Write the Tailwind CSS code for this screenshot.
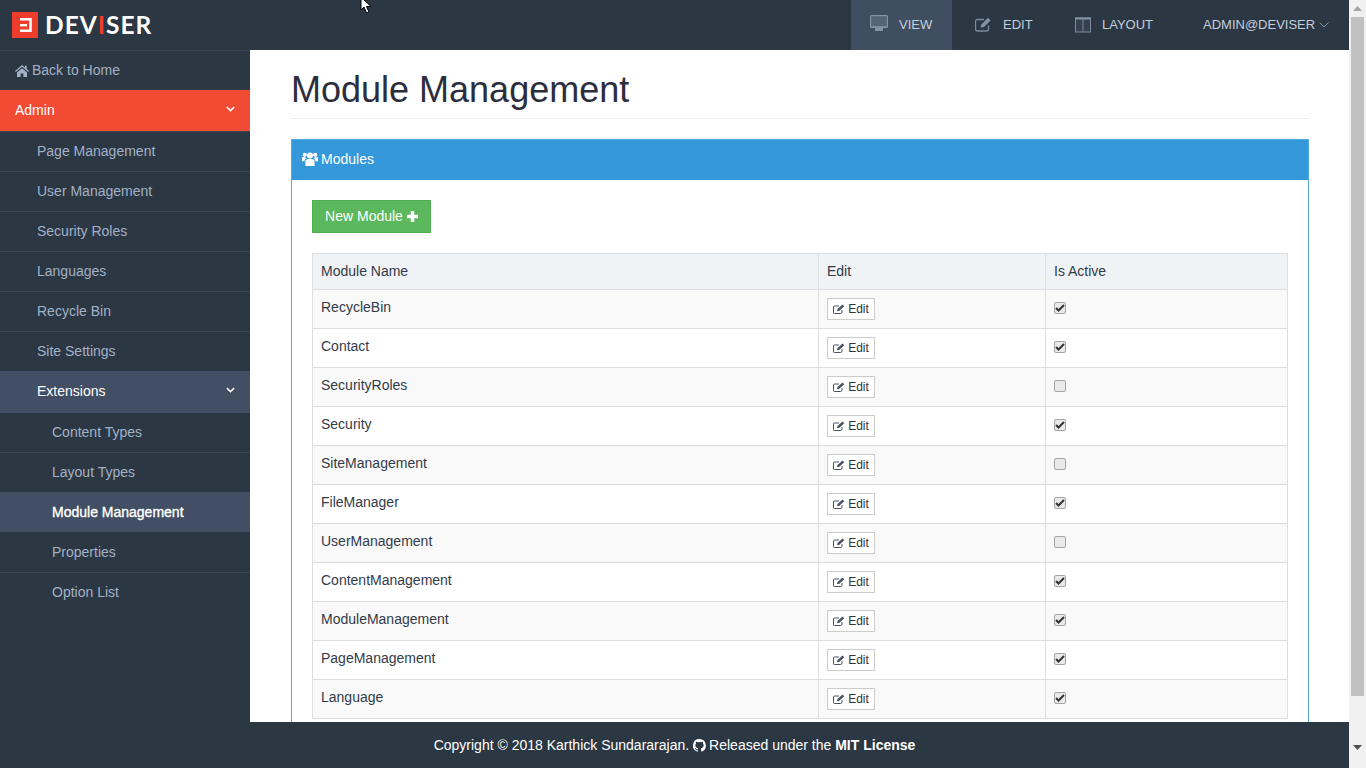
<!DOCTYPE html>
<html lang="en">
<head>
<meta charset="utf-8">
<title>Module Management</title>
<script src="https://cdn.jsdelivr.net/npm/@tailwindcss/browser@4"></script>
</head>
<body class="overflow-hidden font-['Liberation_Sans',Arial,sans-serif]">
<div class="relative flex h-[768px] w-[1366px] overflow-hidden bg-white">
  <div class="flex h-full w-[1349px] flex-col">
    <!-- Top bar -->
    <header class="flex h-[50px] shrink-0 items-center bg-[#2c3744]">
      <div class="ml-[12px] flex items-center">
        <svg width="26" height="26" viewBox="0 0 26 26"><rect width="26" height="26" fill="#ee3e2b"/><path d="M8 7.300h10.500v11.500H8" fill="none" stroke="#fff" stroke-width="2.500"/><path d="M8 13.200h7" stroke="#fff" stroke-width="2.300"/></svg>
        <span class="ml-[7px] text-[24.500px] font-bold leading-none tracking-[1px] text-white font-['Lato',sans-serif]">DEV<span class="text-[#ee3e2b]">I</span>SER</span>
      </div>
      <nav class="ml-auto flex h-full items-center text-[13px] text-[#c3cedb]">
        <a class="flex h-full w-[101px] items-center bg-[#3f4e60] pb-[1px] pl-[19px]">
          <svg class="mb-[3px]" width="18" height="16" viewBox="0 0 18 16" fill="none"><rect x="0" y="0" width="18" height="13" rx="1.500" fill="#8392a5"/><rect x="1.200" y="1.200" width="15.600" height="10" fill="#566577"/><rect x="5" y="13" width="8" height="3" fill="#8392a5"/></svg>
          <span class="ml-[11px]">VIEW</span>
        </a>
        <a class="flex h-full w-[103px] items-center pb-[1px] pl-[23px]">
          <svg class="mb-[1px]" width="17" height="15" viewBox="0 0 17 15" fill="none"><path d="M13.500 8.500V12a2 2 0 0 1-2 2h-9a2 2 0 0 1-2-2V4.500a2 2 0 0 1 2-2H9" stroke="#7c8a9b" stroke-width="1.300"/><path d="M5.500 10.500l.8-3L13 .8l2.600 2.600L9 10z" fill="#8392a5"/></svg>
          <span class="ml-[11px]">EDIT</span>
        </a>
        <a class="flex h-full w-[148px] items-center pb-[1px] pl-[20px]">
          <svg width="16" height="16" viewBox="0 0 16 16" fill="none"><rect x="0.500" y="1" width="15" height="14" fill="#35414f" stroke="#7c8a9b"/><path d="M0 1.500h16" stroke="#8392a5" stroke-width="2"/><path d="M8 1.500v13.500" stroke="#7c8a9b"/></svg>
          <span class="ml-[11px]">LAYOUT</span>
        </a>
        <a class="flex h-full w-[146px] items-center pb-[1px]">
          <span>ADMIN@DEVISER</span>
          <svg class="ml-[4px]" width="10" height="6" viewBox="0 0 10 6" fill="none"><path d="M.5.5 5 5 9.500.5" stroke="#8695a6"/></svg>
        </a>
      </nav>
    </header>

    <div class="flex min-h-0 flex-1">
      <!-- Sidebar -->
      <aside class="flex w-[250px] shrink-0 flex-col bg-[#2c3744] text-[14px] text-[#a3b1c4]">
        <a class="flex h-[40px] items-center border-t border-[#3a4655] pl-[15px]">
          <svg width="14" height="12" viewBox="0 0 14 12" fill="#a3b1c4"><path d="M7 0 0 6l.8.900L7 1.700l6.200 5.200L14 6l-2.300-2V.8H9.900v1.600zM2 7.400V12h3.600V8.400h2.800V12H12V7.400L7 3.200z"/></svg>
          <span class="ml-[3px]">Back to Home</span>
        </a>
        <a class="flex h-[41px] items-center justify-between bg-[#f24b34] pb-[1px] pl-[15px] pr-[15px] text-white">
          <span>Admin</span>
          <svg class="mb-[3px]" width="9" height="6" viewBox="0 0 9 6" fill="none"><path d="M.8 1 4.500 4.600 8.200 1" stroke="#fff" stroke-width="1.600"/></svg>
        </a>
        <a class="flex h-[40px] items-center border-t border-[#3a4655] pl-[37px]">Page Management</a>
        <a class="flex h-[40px] items-center border-t border-[#3a4655] pl-[37px]">User Management</a>
        <a class="flex h-[40px] items-center border-t border-[#3a4655] pl-[37px]">Security Roles</a>
        <a class="flex h-[40px] items-center border-t border-[#3a4655] pl-[37px]">Languages</a>
        <a class="flex h-[40px] items-center border-t border-[#3a4655] pl-[37px]">Recycle Bin</a>
        <a class="flex h-[40px] items-center border-t border-[#3a4655] pl-[37px]">Site Settings</a>
        <a class="flex h-[42px] items-center justify-between bg-[#414e63] pb-[2px] pl-[37px] pr-[15px] text-white">
          <span>Extensions</span>
          <svg class="mb-[3px]" width="9" height="6" viewBox="0 0 9 6" fill="none"><path d="M.8 1 4.500 4.600 8.200 1" stroke="#fff" stroke-width="1.600"/></svg>
        </a>
        <a class="flex h-[40px] items-center border-b border-[#3a4655] pl-[52px]">Content Types</a>
        <a class="flex h-[39px] items-center pl-[52px]">Layout Types</a>
        <a class="flex h-[40px] items-center bg-[#414e63] pl-[52px] text-white [-webkit-text-stroke:0.35px_#fff]">Module Management</a>
        <a class="flex h-[40px] items-center pl-[52px]">Properties</a>
        <a class="flex h-[40px] items-center border-t border-[#3a4655] pl-[52px]">Option List</a>
      </aside>

      <!-- Content -->
      <main class="min-w-0 flex-1 overflow-hidden pl-[41px] pr-[40px] pt-[20px] text-[14px] text-[#333b4a]">
        <h1 class="border-b border-[#eeeeee] pb-[9px] text-[36px] leading-[39px] font-normal text-[#2c2e3e]">Module Management</h1>
        <section class="mt-[20px] border border-[#52a8e0]">
          <div class="flex h-[40px] items-center bg-[#3498db] pb-[2px] pl-[10px] text-white">
            <svg width="16" height="14" viewBox="0 0 16 14" fill="#fff"><circle cx="8" cy="3.600" r="3"/><circle cx="2.800" cy="2.800" r="2.100"/><circle cx="13.200" cy="2.800" r="2.100"/><path d="M3.400 9.500C3.400 7.600 5 7 8 7s4.600.6 4.600 2.500V14H3.400z"/><path d="M0 5.800C0 5.200 1 5.100 2.800 5.100c.4.600.9 1 1.400 1.300-1 .5-1.600 1.300-1.700 2.800H0zM16 5.800c0-.6-1-.7-2.800-.7-.4.600-.9 1-1.400 1.300 1 .5 1.600 1.300 1.700 2.800H16z"/></svg>
            <span class="ml-[3px]">Modules</span>
          </div>
          <div class="px-[20px] pt-[20px] pb-[20px]">
            <a class="flex h-[33px] w-[119px] items-center justify-center border border-[#4cae4c] bg-[#5cb85c] text-white">
              New Module
              <svg class="ml-[4px]" width="11" height="11" viewBox="0 0 11 11" fill="#fff"><path d="M3.800 0h3.400v3.800H11v3.400H7.200V11H3.800V7.200H0V3.800h3.800z"/></svg>
            </a>
            <table class="mt-[20px] w-[975px] table-fixed border-collapse border border-[#e7eaee] text-left">
              <colgroup><col class="w-[506px]"><col class="w-[227px]"><col class="w-[242px]"></colgroup>
              <thead>
                <tr class="h-[36px] bg-[#f0f3f6]">
                  <th class="border border-[#dddfe3] px-[8px] font-normal">Module Name</th>
                  <th class="border border-[#dddfe3] px-[8px] font-normal">Edit</th>
                  <th class="border border-[#dddfe3] px-[8px] font-normal">Is Active</th>
                </tr>
              </thead>
              <tbody>
                <tr class="h-[39px] bg-[#f9f9f9]"><td class="border border-[#dddddd] px-[8px] pb-[4px]">RecycleBin</td><td class="border border-[#dddddd] px-[8px]"><a class="flex h-[22px] w-[48px] items-center justify-center border border-[#cccccc] bg-white text-[12px] text-[#333333]"><svg class="mr-[3px]" width="12" height="10" viewBox="0 0 12 10" fill="none"><path d="M9 6v2a1.500 1.500 0 0 1-1.500 1.500h-6A1 1 0 0 1 .5 8.200V3a1 1 0 0 1 1-1H6" stroke="#4a5160"/><path d="M4 7l.5-2L9.500.5l1.800 1.800L6 7z" fill="#4a5160"/></svg>Edit</a></td><td class="border border-[#dddddd] px-[8px]"><span class="mb-[2px] flex h-[12px] w-[12px] items-center justify-center rounded-[2px] border border-[#a5a5a5] bg-[#e9e9e9]"><svg width="10" height="8" viewBox="0 0 10 8" fill="none"><path d="M1 4l2.500 2.500L9 1" stroke="#333333" stroke-width="2"/></svg></span></td></tr>
                <tr class="h-[39px] bg-white"><td class="border border-[#dddddd] px-[8px] pb-[4px]">Contact</td><td class="border border-[#dddddd] px-[8px]"><a class="flex h-[22px] w-[48px] items-center justify-center border border-[#cccccc] bg-white text-[12px] text-[#333333]"><svg class="mr-[3px]" width="12" height="10" viewBox="0 0 12 10" fill="none"><path d="M9 6v2a1.500 1.500 0 0 1-1.500 1.500h-6A1 1 0 0 1 .5 8.200V3a1 1 0 0 1 1-1H6" stroke="#4a5160"/><path d="M4 7l.5-2L9.500.5l1.800 1.800L6 7z" fill="#4a5160"/></svg>Edit</a></td><td class="border border-[#dddddd] px-[8px]"><span class="mb-[2px] flex h-[12px] w-[12px] items-center justify-center rounded-[2px] border border-[#a5a5a5] bg-[#e9e9e9]"><svg width="10" height="8" viewBox="0 0 10 8" fill="none"><path d="M1 4l2.500 2.500L9 1" stroke="#333333" stroke-width="2"/></svg></span></td></tr>
                <tr class="h-[39px] bg-[#f9f9f9]"><td class="border border-[#dddddd] px-[8px] pb-[4px]">SecurityRoles</td><td class="border border-[#dddddd] px-[8px]"><a class="flex h-[22px] w-[48px] items-center justify-center border border-[#cccccc] bg-white text-[12px] text-[#333333]"><svg class="mr-[3px]" width="12" height="10" viewBox="0 0 12 10" fill="none"><path d="M9 6v2a1.500 1.500 0 0 1-1.500 1.500h-6A1 1 0 0 1 .5 8.200V3a1 1 0 0 1 1-1H6" stroke="#4a5160"/><path d="M4 7l.5-2L9.500.5l1.800 1.800L6 7z" fill="#4a5160"/></svg>Edit</a></td><td class="border border-[#dddddd] px-[8px]"><span class="mb-[2px] block h-[12px] w-[12px] rounded-[2px] border border-[#a5a5a5] bg-[#e9e9e9]"></span></td></tr>
                <tr class="h-[39px] bg-white"><td class="border border-[#dddddd] px-[8px] pb-[4px]">Security</td><td class="border border-[#dddddd] px-[8px]"><a class="flex h-[22px] w-[48px] items-center justify-center border border-[#cccccc] bg-white text-[12px] text-[#333333]"><svg class="mr-[3px]" width="12" height="10" viewBox="0 0 12 10" fill="none"><path d="M9 6v2a1.500 1.500 0 0 1-1.500 1.500h-6A1 1 0 0 1 .5 8.200V3a1 1 0 0 1 1-1H6" stroke="#4a5160"/><path d="M4 7l.5-2L9.500.5l1.800 1.800L6 7z" fill="#4a5160"/></svg>Edit</a></td><td class="border border-[#dddddd] px-[8px]"><span class="mb-[2px] flex h-[12px] w-[12px] items-center justify-center rounded-[2px] border border-[#a5a5a5] bg-[#e9e9e9]"><svg width="10" height="8" viewBox="0 0 10 8" fill="none"><path d="M1 4l2.500 2.500L9 1" stroke="#333333" stroke-width="2"/></svg></span></td></tr>
                <tr class="h-[39px] bg-[#f9f9f9]"><td class="border border-[#dddddd] px-[8px] pb-[4px]">SiteManagement</td><td class="border border-[#dddddd] px-[8px]"><a class="flex h-[22px] w-[48px] items-center justify-center border border-[#cccccc] bg-white text-[12px] text-[#333333]"><svg class="mr-[3px]" width="12" height="10" viewBox="0 0 12 10" fill="none"><path d="M9 6v2a1.500 1.500 0 0 1-1.500 1.500h-6A1 1 0 0 1 .5 8.200V3a1 1 0 0 1 1-1H6" stroke="#4a5160"/><path d="M4 7l.5-2L9.500.5l1.800 1.800L6 7z" fill="#4a5160"/></svg>Edit</a></td><td class="border border-[#dddddd] px-[8px]"><span class="mb-[2px] block h-[12px] w-[12px] rounded-[2px] border border-[#a5a5a5] bg-[#e9e9e9]"></span></td></tr>
                <tr class="h-[39px] bg-white"><td class="border border-[#dddddd] px-[8px] pb-[4px]">FileManager</td><td class="border border-[#dddddd] px-[8px]"><a class="flex h-[22px] w-[48px] items-center justify-center border border-[#cccccc] bg-white text-[12px] text-[#333333]"><svg class="mr-[3px]" width="12" height="10" viewBox="0 0 12 10" fill="none"><path d="M9 6v2a1.500 1.500 0 0 1-1.500 1.500h-6A1 1 0 0 1 .5 8.200V3a1 1 0 0 1 1-1H6" stroke="#4a5160"/><path d="M4 7l.5-2L9.500.5l1.800 1.800L6 7z" fill="#4a5160"/></svg>Edit</a></td><td class="border border-[#dddddd] px-[8px]"><span class="mb-[2px] flex h-[12px] w-[12px] items-center justify-center rounded-[2px] border border-[#a5a5a5] bg-[#e9e9e9]"><svg width="10" height="8" viewBox="0 0 10 8" fill="none"><path d="M1 4l2.500 2.500L9 1" stroke="#333333" stroke-width="2"/></svg></span></td></tr>
                <tr class="h-[39px] bg-[#f9f9f9]"><td class="border border-[#dddddd] px-[8px] pb-[4px]">UserManagement</td><td class="border border-[#dddddd] px-[8px]"><a class="flex h-[22px] w-[48px] items-center justify-center border border-[#cccccc] bg-white text-[12px] text-[#333333]"><svg class="mr-[3px]" width="12" height="10" viewBox="0 0 12 10" fill="none"><path d="M9 6v2a1.500 1.500 0 0 1-1.500 1.500h-6A1 1 0 0 1 .5 8.200V3a1 1 0 0 1 1-1H6" stroke="#4a5160"/><path d="M4 7l.5-2L9.500.5l1.800 1.800L6 7z" fill="#4a5160"/></svg>Edit</a></td><td class="border border-[#dddddd] px-[8px]"><span class="mb-[2px] block h-[12px] w-[12px] rounded-[2px] border border-[#a5a5a5] bg-[#e9e9e9]"></span></td></tr>
                <tr class="h-[39px] bg-white"><td class="border border-[#dddddd] px-[8px] pb-[4px]">ContentManagement</td><td class="border border-[#dddddd] px-[8px]"><a class="flex h-[22px] w-[48px] items-center justify-center border border-[#cccccc] bg-white text-[12px] text-[#333333]"><svg class="mr-[3px]" width="12" height="10" viewBox="0 0 12 10" fill="none"><path d="M9 6v2a1.500 1.500 0 0 1-1.500 1.500h-6A1 1 0 0 1 .5 8.200V3a1 1 0 0 1 1-1H6" stroke="#4a5160"/><path d="M4 7l.5-2L9.500.5l1.800 1.800L6 7z" fill="#4a5160"/></svg>Edit</a></td><td class="border border-[#dddddd] px-[8px]"><span class="mb-[2px] flex h-[12px] w-[12px] items-center justify-center rounded-[2px] border border-[#a5a5a5] bg-[#e9e9e9]"><svg width="10" height="8" viewBox="0 0 10 8" fill="none"><path d="M1 4l2.500 2.500L9 1" stroke="#333333" stroke-width="2"/></svg></span></td></tr>
                <tr class="h-[39px] bg-[#f9f9f9]"><td class="border border-[#dddddd] px-[8px] pb-[4px]">ModuleManagement</td><td class="border border-[#dddddd] px-[8px]"><a class="flex h-[22px] w-[48px] items-center justify-center border border-[#cccccc] bg-white text-[12px] text-[#333333]"><svg class="mr-[3px]" width="12" height="10" viewBox="0 0 12 10" fill="none"><path d="M9 6v2a1.500 1.500 0 0 1-1.500 1.500h-6A1 1 0 0 1 .5 8.200V3a1 1 0 0 1 1-1H6" stroke="#4a5160"/><path d="M4 7l.5-2L9.500.5l1.800 1.800L6 7z" fill="#4a5160"/></svg>Edit</a></td><td class="border border-[#dddddd] px-[8px]"><span class="mb-[2px] flex h-[12px] w-[12px] items-center justify-center rounded-[2px] border border-[#a5a5a5] bg-[#e9e9e9]"><svg width="10" height="8" viewBox="0 0 10 8" fill="none"><path d="M1 4l2.500 2.500L9 1" stroke="#333333" stroke-width="2"/></svg></span></td></tr>
                <tr class="h-[39px] bg-white"><td class="border border-[#dddddd] px-[8px] pb-[4px]">PageManagement</td><td class="border border-[#dddddd] px-[8px]"><a class="flex h-[22px] w-[48px] items-center justify-center border border-[#cccccc] bg-white text-[12px] text-[#333333]"><svg class="mr-[3px]" width="12" height="10" viewBox="0 0 12 10" fill="none"><path d="M9 6v2a1.500 1.500 0 0 1-1.500 1.500h-6A1 1 0 0 1 .5 8.200V3a1 1 0 0 1 1-1H6" stroke="#4a5160"/><path d="M4 7l.5-2L9.500.5l1.800 1.800L6 7z" fill="#4a5160"/></svg>Edit</a></td><td class="border border-[#dddddd] px-[8px]"><span class="mb-[2px] flex h-[12px] w-[12px] items-center justify-center rounded-[2px] border border-[#a5a5a5] bg-[#e9e9e9]"><svg width="10" height="8" viewBox="0 0 10 8" fill="none"><path d="M1 4l2.500 2.500L9 1" stroke="#333333" stroke-width="2"/></svg></span></td></tr>
                <tr class="h-[39px] bg-[#f9f9f9]"><td class="border border-[#dddddd] px-[8px] pb-[4px]">Language</td><td class="border border-[#dddddd] px-[8px]"><a class="flex h-[22px] w-[48px] items-center justify-center border border-[#cccccc] bg-white text-[12px] text-[#333333]"><svg class="mr-[3px]" width="12" height="10" viewBox="0 0 12 10" fill="none"><path d="M9 6v2a1.500 1.500 0 0 1-1.500 1.500h-6A1 1 0 0 1 .5 8.200V3a1 1 0 0 1 1-1H6" stroke="#4a5160"/><path d="M4 7l.5-2L9.500.5l1.800 1.800L6 7z" fill="#4a5160"/></svg>Edit</a></td><td class="border border-[#dddddd] px-[8px]"><span class="mb-[2px] flex h-[12px] w-[12px] items-center justify-center rounded-[2px] border border-[#a5a5a5] bg-[#e9e9e9]"><svg width="10" height="8" viewBox="0 0 10 8" fill="none"><path d="M1 4l2.500 2.500L9 1" stroke="#333333" stroke-width="2"/></svg></span></td></tr>
              </tbody>
            </table>
          </div>
        </section>
      </main>
    </div>

    <!-- Footer -->
    <footer class="flex h-[46px] shrink-0 items-center justify-center bg-[#2c3744] text-[14px] text-white">
      <span>Copyright © 2018 Karthick Sundararajan.</span>
      <svg class="ml-[4px] mr-[3px]" width="13" height="13" viewBox="0 0 16 16" fill="#fff"><path d="M8 0a8 8 0 0 0-2.500 15.600c.4.100.5-.2.500-.4v-1.400c-2.200.5-2.700-1-2.700-1-.4-.9-.9-1.200-.9-1.200-.7-.5.100-.5.100-.5.800.100 1.200.8 1.200.8.700 1.200 1.900.9 2.300.7.100-.5.300-.9.500-1.100-1.800-.2-3.600-.9-3.600-4 0-.9.300-1.600.8-2.100-.1-.2-.4-1 .1-2.100 0 0 .7-.2 2.200.8a7.600 7.600 0 0 1 4 0c1.500-1 2.200-.8 2.200-.8.400 1.100.2 1.900.1 2.100.5.600.8 1.300.8 2.100 0 3.100-1.900 3.700-3.700 3.900.3.300.6.800.6 1.500v2.200c0 .2.100.5.600.4A8 8 0 0 0 8 0z"/></svg>
      <span>Released under the <b>MIT License</b></span>
    </footer>
  </div>

  <!-- Scrollbar -->
  <div class="flex h-full w-[17px] shrink-0 flex-col items-center bg-[#f1f1f1]">
    <svg class="mt-[6px]" width="9" height="5" viewBox="0 0 9 5"><path d="M4.500 0 9 5H0z" fill="#a3a3a3"/></svg>
    <div class="mt-[6px] h-[679px] w-[13px] bg-[#c1c1c1]"></div>
    <svg class="mt-[49px]" width="9" height="5" viewBox="0 0 9 5"><path d="M0 0h9L4.500 5z" fill="#505050"/></svg>
  </div>

  <!-- Captured mouse pointer -->
  <svg class="absolute left-[360px] top-[-4px]" width="13" height="18" viewBox="0 0 13 18"><path d="M1 1v13l3-3 2.500 6 2.500-1-2.500-5.500H11z" fill="#fff" stroke="#000"/></svg>
</div>
</body>
</html>
